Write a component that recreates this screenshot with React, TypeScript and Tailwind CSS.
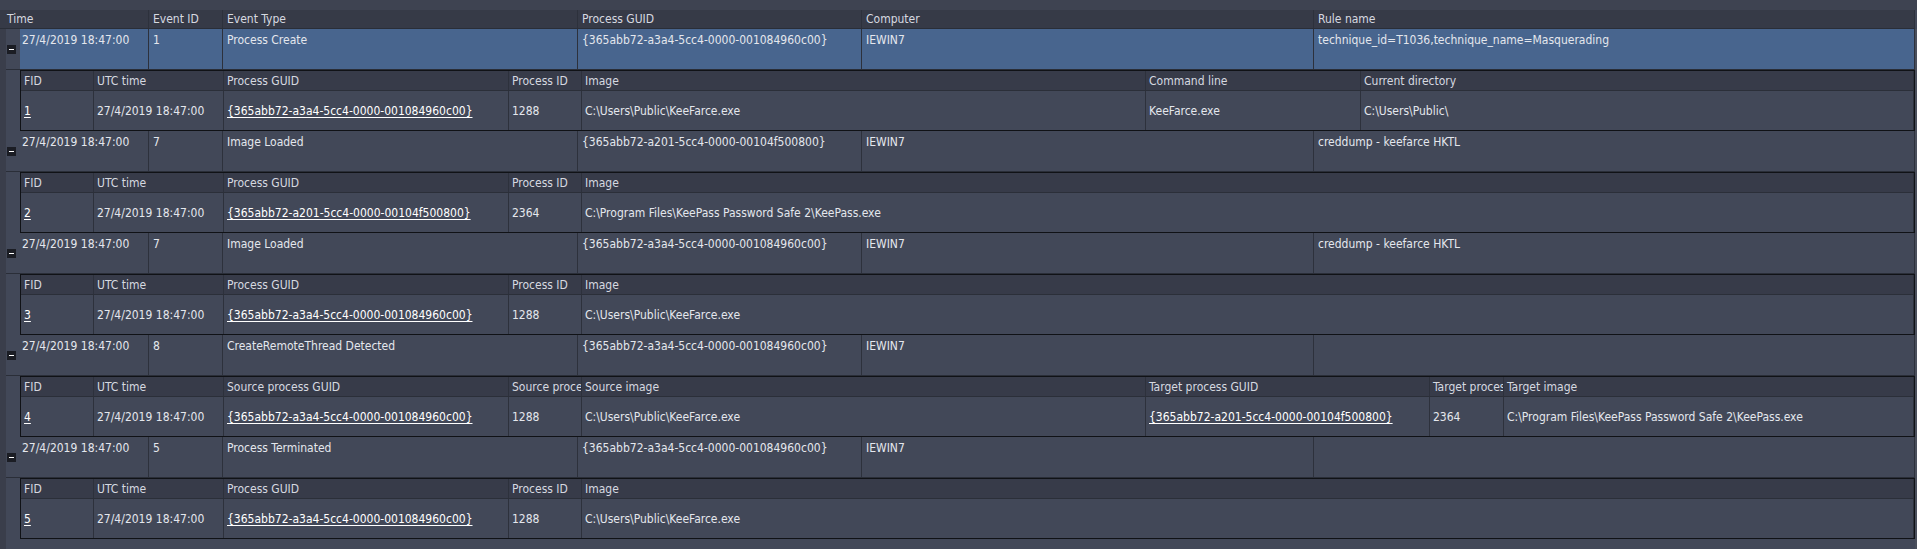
import React from "react"

type Cell = { text: string; link?: boolean }
type Col = { label: string; w: string }

const TIME = "27/4/2019 18:47:00"
const GUID_A = "{365abb72-a3a4-5cc4-0000-001084960c00}"
const GUID_B = "{365abb72-a201-5cc4-0000-00104f500800}"
const KEEFARCE = "C:\\Users\\Public\\KeeFarce.exe"
const KEEPASS = "C:\\Program Files\\KeePass Password Safe 2\\KeePass.exe"

const baseCols: Col[] = [
  { label: "FID", w: "w-[73px]" },
  { label: "UTC time", w: "w-[130px]" },
  { label: "Process GUID", w: "w-[285px]" },
  { label: "Process ID", w: "w-[73px]" },
]

const events = [
  {
    time: TIME,
    id: "1",
    type: "Process Create",
    guid: GUID_A,
    computer: "IEWIN7",
    rule: "technique_id=T1036,technique_name=Masquerading",
    selected: true,
    cols: [
      ...baseCols,
      { label: "Image", w: "w-[564px]" },
      { label: "Command line", w: "w-[215px]" },
      { label: "Current directory", w: "flex-1" },
    ],
    values: [
      { text: "1", link: true },
      { text: TIME },
      { text: GUID_A, link: true },
      { text: "1288" },
      { text: KEEFARCE },
      { text: "KeeFarce.exe" },
      { text: "C:\\Users\\Public\\" },
    ] as Cell[],
  },
  {
    time: TIME,
    id: "7",
    type: "Image Loaded",
    guid: GUID_B,
    computer: "IEWIN7",
    rule: "creddump - keefarce HKTL",
    cols: [...baseCols, { label: "Image", w: "flex-1" }],
    values: [
      { text: "2", link: true },
      { text: TIME },
      { text: GUID_B, link: true },
      { text: "2364" },
      { text: KEEPASS },
    ] as Cell[],
  },
  {
    time: TIME,
    id: "7",
    type: "Image Loaded",
    guid: GUID_A,
    computer: "IEWIN7",
    rule: "creddump - keefarce HKTL",
    cols: [...baseCols, { label: "Image", w: "flex-1" }],
    values: [
      { text: "3", link: true },
      { text: TIME },
      { text: GUID_A, link: true },
      { text: "1288" },
      { text: KEEFARCE },
    ] as Cell[],
  },
  {
    time: TIME,
    id: "8",
    type: "CreateRemoteThread Detected",
    guid: GUID_A,
    computer: "IEWIN7",
    rule: "",
    cols: [
      { label: "FID", w: "w-[73px]" },
      { label: "UTC time", w: "w-[130px]" },
      { label: "Source process GUID", w: "w-[285px]" },
      { label: "Source process ID", w: "w-[73px]" },
      { label: "Source image", w: "w-[564px]" },
      { label: "Target process GUID", w: "w-[284px]" },
      { label: "Target process ID", w: "w-[74px]" },
      { label: "Target image", w: "flex-1" },
    ],
    values: [
      { text: "4", link: true },
      { text: TIME },
      { text: GUID_A, link: true },
      { text: "1288" },
      { text: KEEFARCE },
      { text: GUID_B, link: true },
      { text: "2364" },
      { text: KEEPASS },
    ] as Cell[],
  },
  {
    time: TIME,
    id: "5",
    type: "Process Terminated",
    guid: GUID_A,
    computer: "IEWIN7",
    rule: "",
    cols: [...baseCols, { label: "Image", w: "flex-1" }],
    values: [
      { text: "5", link: true },
      { text: TIME },
      { text: GUID_A, link: true },
      { text: "1288" },
      { text: KEEFARCE },
    ] as Cell[],
  },
]

const cell = "shrink-0 overflow-hidden whitespace-nowrap border-r border-[#2d313c] px-[4px]"

function SubTable({ cols, values }: { cols: Col[]; values: Cell[] }) {
  return (
    <div className="flex h-[61px] flex-col border border-[#101216]">
      <div className="flex h-[20px] border-b border-[#2b2f39] bg-[#373b49] text-[#d6d9e0]">
        {cols.map((c, i) => (
          <div key={i} className={`${cell} ${c.w} flex items-center pl-[3px] pr-0`}>
            {c.label}
          </div>
        ))}
      </div>
      <div className="flex h-[39px] bg-[#424858]">
        {values.map((v, i) => (
          <div key={i} className={`${cell} ${cols[i].w} flex items-center pl-[3px]`}>
            <span className={v.link ? "text-white underline underline-offset-[2px]" : ""}>{v.text}</span>
          </div>
        ))}
      </div>
    </div>
  )
}

export default function App() {
  return (
    <div className="h-[549px] w-[1917px] overflow-hidden bg-[#424858] font-['DejaVu_Sans_Condensed','Liberation_Sans',sans-serif] text-[12px] leading-[16px] text-[#e4e7ed]">
      <div className="h-[10px] bg-[#3e4351]" />
      <div className="flex h-[19px] w-[1915px] border-b border-[#2a2e38] bg-[#363a47] text-[#d6d9e0]">
        <div className={`${cell} flex w-[149px] items-center pl-[7px]`}>Time</div>
        <div className={`${cell} flex w-[74px] items-center`}>Event ID</div>
        <div className={`${cell} flex w-[355px] items-center`}>Event Type</div>
        <div className={`${cell} flex w-[284px] items-center`}>Process GUID</div>
        <div className={`${cell} flex w-[452px] items-center`}>Computer</div>
        <div className={`${cell} flex flex-1 items-center`}>Rule name</div>
      </div>
      <div className="flex">
        <div className="h-[520px] w-[6px] shrink-0 bg-[#3a3e4b]" />
        <div className="flex w-[1909px] shrink-0 flex-col">
          {events.map((e, i) => (
            <div key={i} className="flex flex-col">
              <div className="flex h-[41px] border-b border-[#2a2e38]">
                <div className="w-[14px] shrink-0 pl-[1px] pt-[16px]">
                  <div className="flex h-[9px] w-[9px] items-center justify-center bg-[#1b1d24]">
                    <div className="h-[1px] w-[5px] bg-white" />
                  </div>
                </div>
                <div className={`flex flex-1 ${e.selected ? "bg-[#48658e]" : "bg-[#424858]"}`}>
                  <div className={`${cell} w-[129px] pl-[2px] pt-[3px]`}>{e.time}</div>
                  <div className={`${cell} w-[74px] pt-[3px]`}>{e.id}</div>
                  <div className={`${cell} w-[355px] pt-[3px]`}>{e.type}</div>
                  <div className={`${cell} w-[284px] pt-[3px]`}>{e.guid}</div>
                  <div className={`${cell} w-[452px] pt-[3px]`}>{e.computer}</div>
                  <div className={`${cell} flex-1 pt-[3px]`}>{e.rule}</div>
                </div>
              </div>
              <div className="pl-[14px]">
                <SubTable cols={e.cols} values={e.values} />
              </div>
            </div>
          ))}
        </div>
        <div className="h-[520px] w-[2px] shrink-0 bg-[#4a4f5c]" />
      </div>
    </div>
  )
}
